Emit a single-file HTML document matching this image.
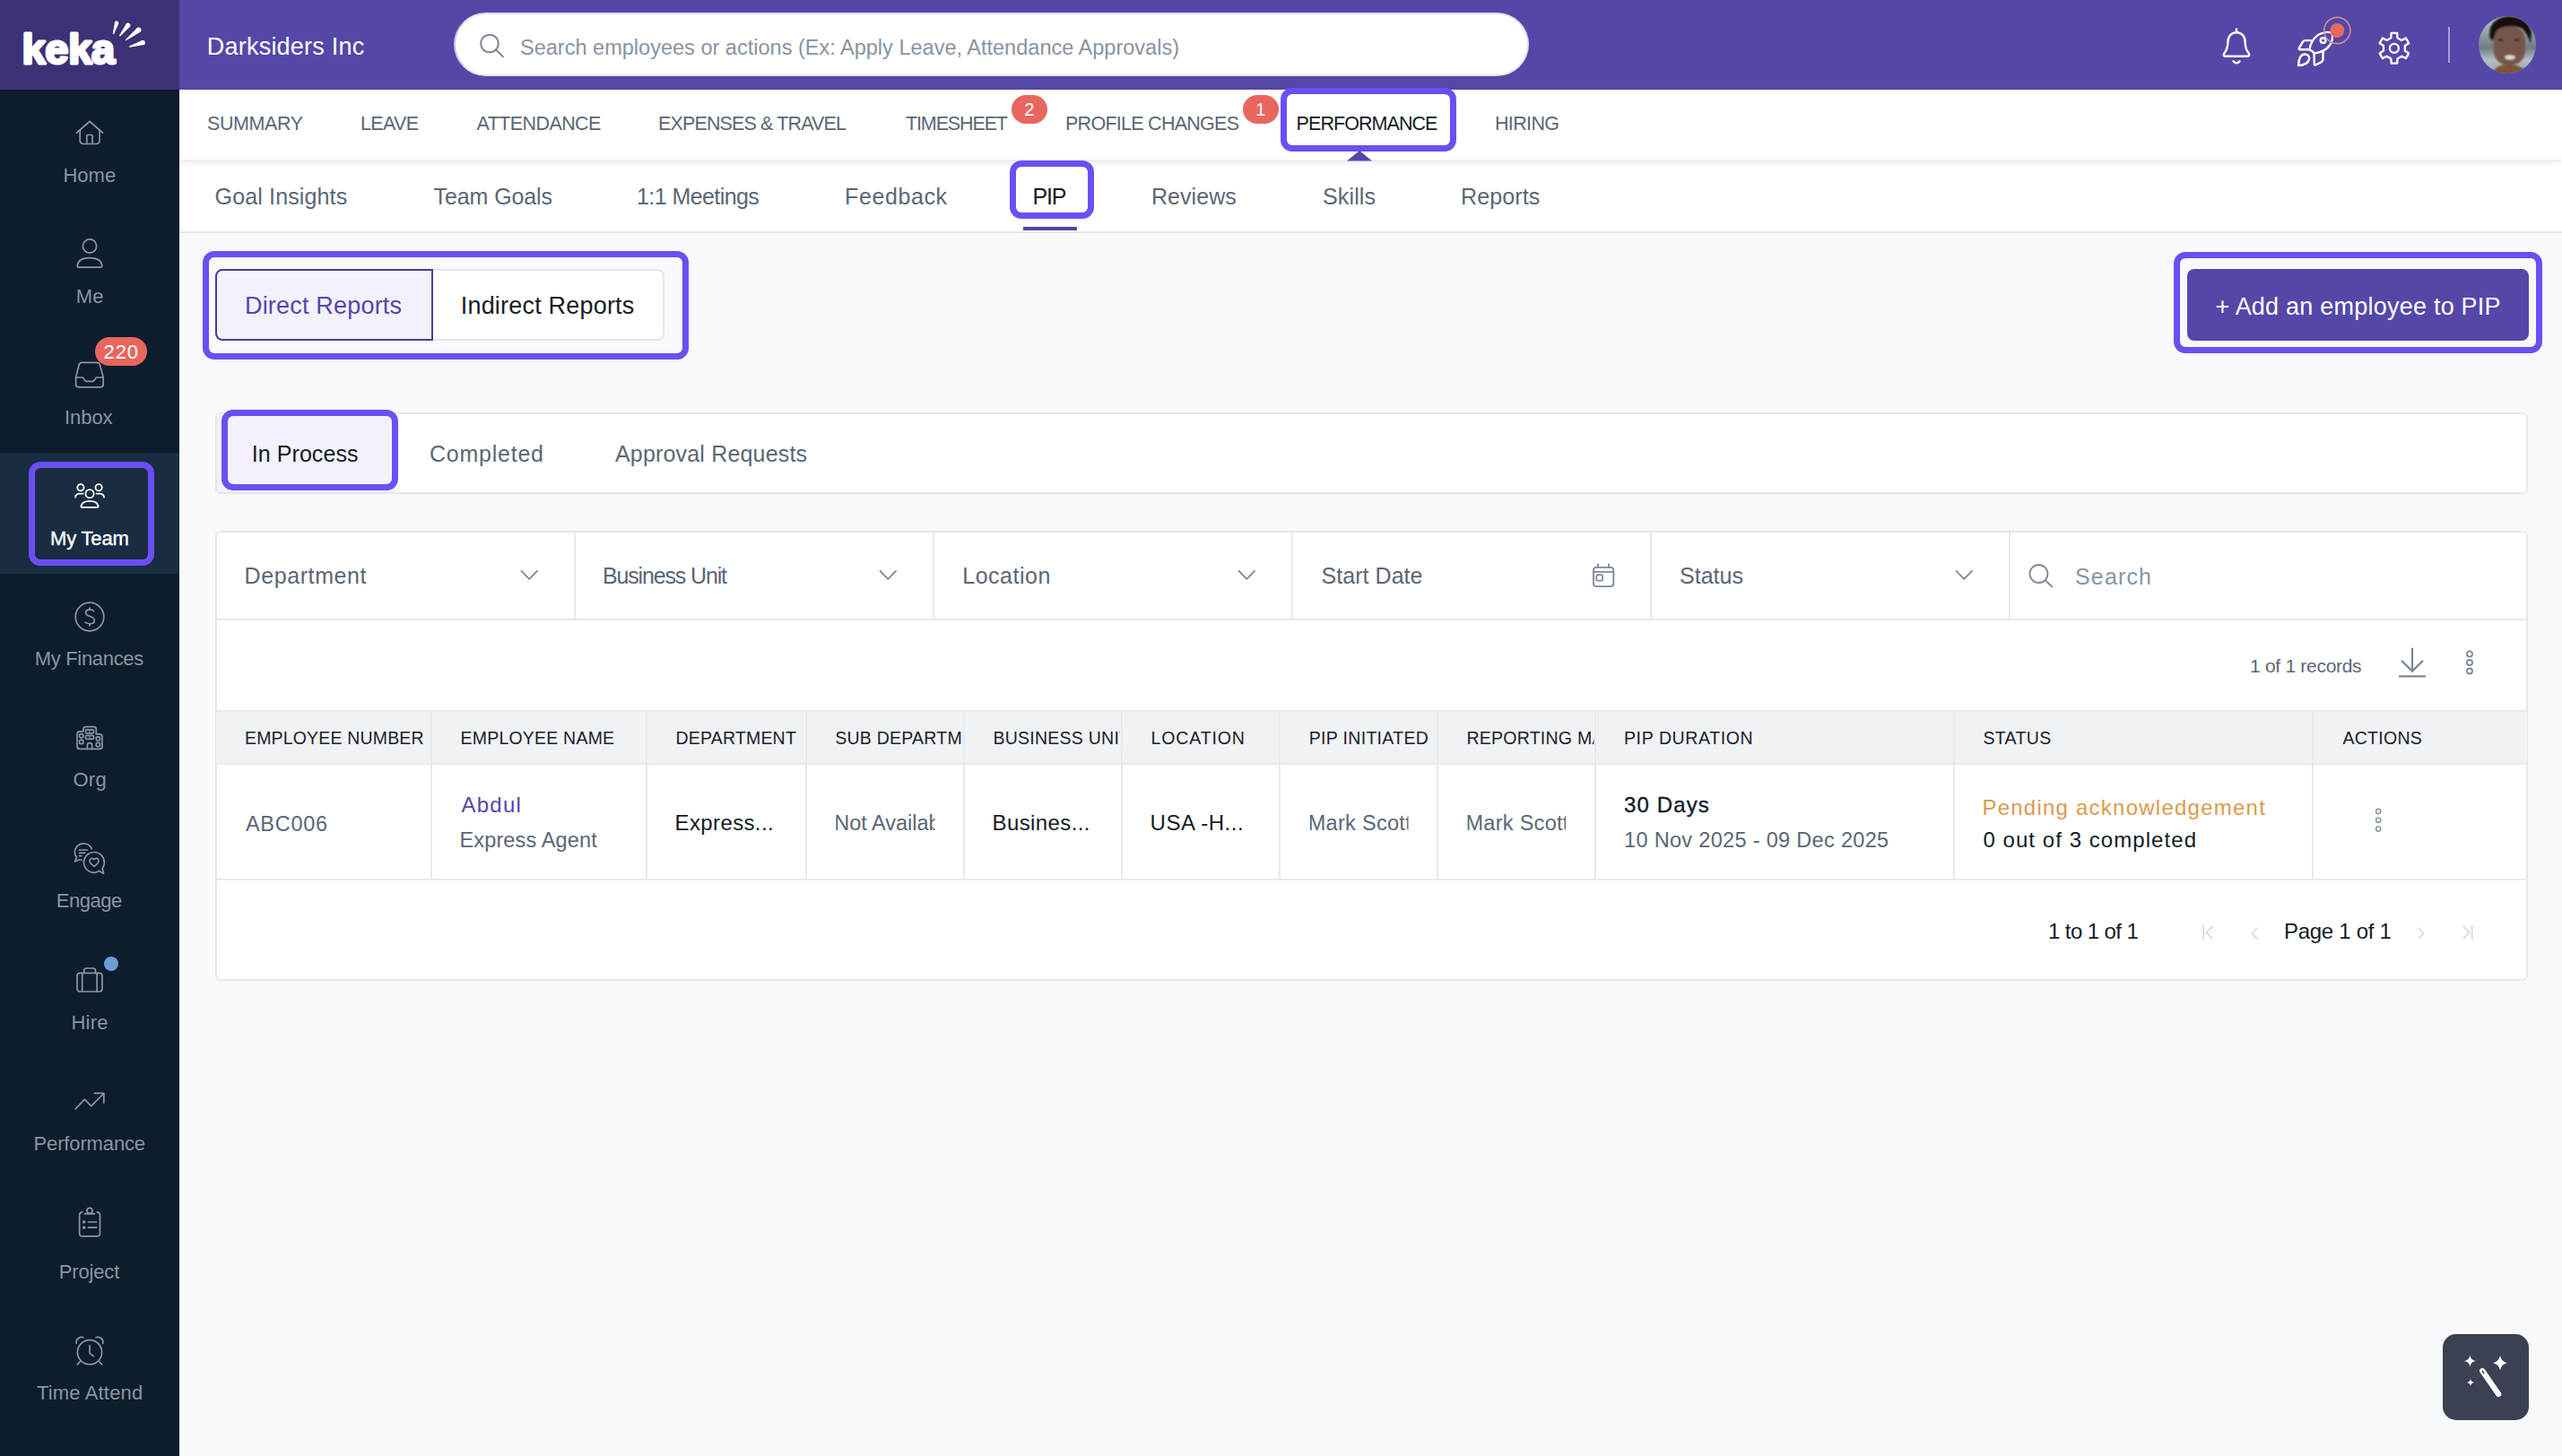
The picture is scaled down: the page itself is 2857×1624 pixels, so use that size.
<!DOCTYPE html>
<html><head><meta charset="utf-8"><title>Keka PIP</title>
<style>
html,body{margin:0;padding:0;}
body{width:2857px;height:1624px;overflow:hidden;position:relative;background:#f8f9fb;font-family:"Liberation Sans",sans-serif;}
.a{position:absolute;box-sizing:border-box;}
.t{position:absolute;z-index:5;white-space:nowrap;line-height:1;font-family:"Liberation Sans",sans-serif;}
.hl{position:absolute;box-sizing:border-box;border:7px solid #6a4ff4;border-radius:13px;}
body>svg{position:absolute;overflow:visible;}

</style></head><body>
<!-- sidebar -->
<div class="a" style="left:0;top:0;width:200px;height:1624px;background:#0d1d2c"></div>
<div class="a" style="left:0;top:0;width:200px;height:100px;background:#3c3175"></div>
<div class="a" style="left:0;top:505px;width:200px;height:135px;background:#192c42"></div>
<div class="hl" style="left:32px;top:515px;width:140px;height:116px;"></div>
<!-- header -->
<div class="a" style="left:200px;top:0;width:2657px;height:100px;background:#5547a8"></div>
<div class="a" style="left:506px;top:14px;width:1199px;height:71px;background:#fff;border-radius:36px;border:2px solid #dfe2e8;border-left-color:#c9cbe0;"></div>
<!-- nav -->
<div class="a" style="left:200px;top:100px;width:2657px;height:78px;background:#fff;box-shadow:0 3px 7px rgba(20,30,50,0.1);z-index:1"></div>
<div class="a" style="left:200px;top:178px;width:2657px;height:82px;background:#fff;border-bottom:2px solid #e6e8ec"></div>
<div class="a" style="left:1141px;top:253px;width:60px;height:4px;background:#5547a8;z-index:2"></div>
<!-- badges -->
<div class="a" style="left:1128px;top:106px;width:40px;height:32px;border-radius:16px;background:#e8665e;z-index:3"></div>
<div class="a" style="left:1386px;top:106px;width:40px;height:32px;border-radius:16px;background:#e8665e;z-index:3"></div>
<div class="a" style="left:106px;top:376px;width:58px;height:32px;border-radius:16px;background:#e8665e;z-index:3"></div>
<!-- highlight perf -->
<div class="hl" style="left:1428px;top:98px;width:196px;height:71px;z-index:3"></div>
<svg style="left:1502px;top:168px;z-index:3" width="28" height="12"><path d="M0 11.5 L14 0 L28 11.5 Z" fill="#5547a8"/></svg>
<div class="hl" style="left:1126px;top:179px;width:94px;height:65px;z-index:3"></div>
<!-- toggle -->
<div class="hl" style="left:226px;top:280px;width:542px;height:121px;"></div>
<div class="a" style="left:240px;top:300px;width:501px;height:80px;background:#fff;border:2px solid #e6e7eb;border-radius:8px"></div>
<div class="a" style="left:240px;top:300px;width:243px;height:80px;background:#f4f1fc;border:2px solid #4a3c9e;border-radius:8px 0 0 8px"></div>
<!-- add button -->
<div class="hl" style="left:2424px;top:281px;width:411px;height:113px;"></div>
<div class="a" style="left:2439px;top:300px;width:381px;height:80px;background:#5547a8;border-radius:8px"></div>
<!-- tabs -->
<div class="a" style="left:240px;top:460px;width:2579px;height:91px;background:#fff;border:2px solid #e6e7eb;border-radius:6px"></div>
<div class="a" style="left:242px;top:462px;width:200px;height:87px;background:#f4f1fc;"></div>
<div class="hl" style="left:247px;top:457px;width:197px;height:90px;background:#f4f1fc"></div>
<!-- card -->
<div class="a" style="left:240px;top:592px;width:2579px;height:502px;background:#fff;border:2px solid #e6e7eb;border-radius:6px"></div>
<div class="a" style="left:241px;top:690px;width:2577px;height:2px;background:#e6e7eb"></div>
<!-- table header -->
<div class="a" style="left:241px;top:792px;width:2577px;height:61px;background:#f1f2f4;border-top:2px solid #e8e9ec;border-bottom:2px solid #e8e9ec"></div>
<div class="a" style="left:241px;top:980px;width:2577px;height:2px;background:#e8e9ec"></div>
<!-- column dividers -->
<div class="a" style="left:480px;top:792px;width:2px;height:189px;background:#e8e9ec"></div>
<div class="a" style="left:720px;top:792px;width:2px;height:189px;background:#e8e9ec"></div>
<div class="a" style="left:898px;top:792px;width:2px;height:189px;background:#e8e9ec"></div>
<div class="a" style="left:1074px;top:792px;width:2px;height:189px;background:#e8e9ec"></div>
<div class="a" style="left:1250px;top:792px;width:2px;height:189px;background:#e8e9ec"></div>
<div class="a" style="left:1426px;top:792px;width:2px;height:189px;background:#e8e9ec"></div>
<div class="a" style="left:1602px;top:792px;width:2px;height:189px;background:#e8e9ec"></div>
<div class="a" style="left:1778px;top:792px;width:2px;height:189px;background:#e8e9ec"></div>
<div class="a" style="left:2178px;top:792px;width:2px;height:189px;background:#e8e9ec"></div>
<div class="a" style="left:2578px;top:792px;width:2px;height:189px;background:#e8e9ec"></div>
<!-- filter dividers -->
<div class="a" style="left:640px;top:594px;width:2px;height:97px;background:#e8e9ec"></div>
<div class="a" style="left:1040px;top:594px;width:2px;height:97px;background:#e8e9ec"></div>
<div class="a" style="left:1440px;top:594px;width:2px;height:97px;background:#e8e9ec"></div>
<div class="a" style="left:1840px;top:594px;width:2px;height:97px;background:#e8e9ec"></div>
<div class="a" style="left:2240px;top:594px;width:2px;height:97px;background:#e8e9ec"></div>
<svg style="left:0;top:0;z-index:6;pointer-events:none" width="2857" height="1624" viewBox="0 0 2857 1624">
<!-- logo text -->
<text x="24.5" y="71.3" font-family="Liberation Sans" font-weight="700" font-size="47" letter-spacing="-0.3" fill="#fff" stroke="#fff" stroke-width="3" stroke-linejoin="round">keka</text>
<!-- avatar -->
<defs><clipPath id="avc"><circle cx="2796" cy="50" r="32"/></clipPath>
<filter id="blur1" x="-20%" y="-20%" width="140%" height="140%"><feGaussianBlur stdDeviation="1.3"/></filter>
<linearGradient id="avbg" x1="0" y1="0" x2="0" y2="1"><stop offset="0" stop-color="#c3ccd0"/><stop offset="0.35" stop-color="#8d9aa1"/><stop offset="0.55" stop-color="#6f7d85"/><stop offset="0.75" stop-color="#b4bec4"/><stop offset="1" stop-color="#96a2a8"/></linearGradient></defs>
<g clip-path="url(#avc)">
  <rect x="2762" y="16" width="68" height="68" fill="url(#avbg)"/>
  <g filter="url(#blur1)">
  <path d="M2776 90 Q2779 72 2797 72 Q2818 72 2822 90 Z" fill="#7b5335"/>
  <path d="M2781 44 Q2780 30 2797 28 Q2815 29 2816 44 L2816 58 Q2814 72 2798 73 Q2783 72 2781 58 Z" fill="#74574a"/>
  <path d="M2776.5 42 Q2774 22 2795 18 Q2818 17 2823 36 L2822 48 Q2819 40 2816 36 Q2812 28 2797 29.5 Q2786 30 2783 36 L2780 46 Z" fill="#121010"/>
  <path d="M2786 44.5 h5 M2804 44.5 h5" stroke="#2b1d18" stroke-width="2"/>
  <ellipse cx="2799" cy="64" rx="5.8" ry="2.4" fill="#e8ddd6"/>
  </g>
</g>
<!-- logo -->
<g fill="#fff"><path d="M127.17 37.80 L132.11 26.43 A2.2 2.2 0 0 0 127.89 25.17 L125.83 37.40 Z"/><circle cx="130.00" cy="25.80" r="2.2"/><circle cx="126.50" cy="37.60" r="0.7"/><path d="M134.25 40.13 L144.74 29.91 A2.6 2.6 0 0 0 140.66 26.69 L133.15 39.27 Z"/><circle cx="142.70" cy="28.30" r="2.6"/><circle cx="133.70" cy="39.70" r="0.7"/><path d="M141.03 45.05 L156.24 35.70 A2.8 2.8 0 0 0 152.76 31.30 L140.17 43.95 Z"/><circle cx="154.50" cy="33.50" r="2.8"/><circle cx="140.60" cy="44.50" r="0.7"/><path d="M144.90 52.67 L159.95 50.09 A2.6 2.6 0 0 0 158.45 45.11 L144.50 51.33 Z"/><circle cx="159.20" cy="47.60" r="2.6"/><circle cx="144.70" cy="52.00" r="0.7"/></g>
<!-- header search icon -->
<g fill="none" stroke="#7e8a9a" stroke-width="2" stroke-linecap="round">
  <circle cx="546" cy="48.5" r="9.8"/>
  <line x1="553.3" y1="55.8" x2="561" y2="63.2"/>
</g>
<!-- bell -->
<g fill="none" stroke="#fff" stroke-width="2.4" stroke-linejoin="round" stroke-linecap="round">
  <path d="M2494 36.2 C2487.5 36.2 2484.3 41.5 2484.3 47.5 C2484.3 53 2483.5 55.5 2480.3 59.5 Q2478.5 62.8 2482 62.8 H2506 Q2509.5 62.8 2507.7 59.5 C2504.5 55.5 2503.7 53 2503.7 47.5 C2503.7 41.5 2500.5 36.2 2494 36.2 Z"/>
  <line x1="2494" y1="32.5" x2="2494" y2="35.5"/>
  <path d="M2490.5 68.3 Q2494 72.5 2497.5 68.3"/>
</g>
<!-- rocket -->
<g fill="none" stroke="#fff" stroke-width="2.4" stroke-linejoin="round" stroke-linecap="round">
  <path d="M2575.5 55.5 C2576 49 2580 41 2588 37.5 C2592 35.8 2597 35.5 2600.6 36.5 C2601.5 40.5 2601 46 2598 50.5 C2594.5 55.5 2588 58.5 2580.5 59.5 C2579.5 57.5 2577.5 56 2575.5 55.5 Z"/>
  <circle cx="2590.6" cy="45.1" r="2.9"/>
  <path d="M2577.2 45.1 H2570.6 Q2568.6 45.1 2567.8 46.9 L2564 53.4 Q2563.1 55.3 2565.1 55.3 H2575.5"/>
  <path d="M2580.5 59.5 L2580.8 71.3 Q2581 73 2582.6 72.3 L2588.8 69.1 Q2590.5 68.1 2590.5 66.3 V57.6"/>
  <path d="M2563.1 73 C2563.1 66 2565.6 60.5 2570 60.5 C2573.6 60.5 2576 63 2575 66.5 C2573.5 71 2568.6 72.8 2563.1 73 Z"/>
</g>
<circle cx="2606.3" cy="34" r="14.6" fill="none" stroke="#d08a93" stroke-width="1.6"/>
<circle cx="2606.3" cy="34" r="8" fill="#e8695f"/>
<!-- gear -->
<g fill="none" stroke="#fff" stroke-width="2.3" stroke-linejoin="round">
  <path d="M2666.33 42.13 L2666.62 36.92 L2673.18 36.92 L2673.47 42.13 L2678.22 44.88 L2682.88 42.52 L2686.16 48.20 L2681.79 51.06 L2681.79 56.54 L2686.16 59.40 L2682.88 65.08 L2678.22 62.72 L2673.47 65.47 L2673.18 70.68 L2666.62 70.68 L2666.33 65.47 L2661.58 62.72 L2656.92 65.08 L2653.64 59.40 L2658.01 56.54 L2658.01 51.06 L2653.64 48.20 L2656.92 42.52 L2661.58 44.88 Z"/>
  <circle cx="2669.9" cy="53.8" r="5"/>
</g>
<line x1="2731" y1="30" x2="2731" y2="70" stroke="#a79ddd" stroke-width="2"/>
<!-- sidebar icons -->
<g fill="none" stroke="#8b95a3" stroke-width="1.7" stroke-linecap="round" stroke-linejoin="round">
  <!-- home -->
  <path d="M85.5 148 L100 135.5 L114.5 148"/>
  <path d="M89.2 145.5 V156.5 Q89.2 160.5 93.2 160.5 H107 Q111 160.5 111 156.5 V145.5"/>
  <path d="M96.8 160.5 V151.5 Q96.8 150.5 97.8 150.5 H102.1 Q103.1 150.5 103.1 151.5 V160.5"/>
  <!-- me -->
  <circle cx="100" cy="274.5" r="7.6"/>
  <path d="M87.5 298.2 Q86 298.2 86.3 296 C87 290.5 92.5 287.6 100 287.6 C107.5 287.6 113 290.5 113.7 296 Q114 298.2 112.5 298.2 Z"/>
  <!-- inbox -->
  <path d="M84.6 421 L88.2 406.8 Q88.8 404.3 91.3 404.3 H108.3 Q110.8 404.3 111.4 406.8 L115.2 421 V428.8 Q115.2 431.8 112.2 431.8 H87.6 Q84.6 431.8 84.6 428.8 Z"/>
  <path d="M84.6 421 H92.4 L94.8 424.6 Q95.3 425.3 96.2 425.3 H103.6 Q104.5 425.3 105 424.6 L107.3 421 H115.2"/>
  <!-- finances -->
  <circle cx="100" cy="688" r="15.8"/>
  <path d="M104.6 681.5 Q103 679.8 100.2 679.8 Q95.6 679.8 95.6 683.2 Q95.6 686 100.5 687.5 Q105.3 689 105.3 692 Q105.3 695.8 100.3 695.8 Q96.8 695.8 95 694.2"/>
  <line x1="100" y1="678" x2="100" y2="679.8"/>
  <line x1="100" y1="695.8" x2="100" y2="697.8"/>
  <!-- org -->
  <path d="M86 832 V819 Q86 815.8 89 815.8 H92.9 V813.7 Q92.9 810.7 96 810.7 H104.3 Q107.3 810.7 107.3 813.7 V818.9 H111 Q114 818.9 114 822 V832.4 Q114 835.4 111 835.4 H89 Q86 835.4 86 832.4 Z"/>
  <rect x="95.5" y="813.8" width="9" height="4" rx="1.2"/>
  <rect x="95.5" y="820.4" width="9" height="4" rx="1.2"/>
  <line x1="100" y1="814.5" x2="100" y2="817.1" stroke-width="1.1"/><line x1="100" y1="821.1" x2="100" y2="823.7" stroke-width="1.1"/>
  <rect x="88.6" y="818.6" width="4.2" height="4.2" rx="1.2"/>
  <rect x="88.6" y="825.4" width="4.2" height="4.2" rx="1.2"/>
  <rect x="107.3" y="821.8" width="4.2" height="4.2" rx="1.2"/>
  <rect x="107.3" y="828.4" width="4.2" height="4.2" rx="1.2"/>
  <path d="M97.4 835.4 V831 Q97.4 828.6 100 828.6 Q102.6 828.6 102.6 831 V835.4"/>
  <!-- engage -->
  <path d="M102.3 946.8 C100.8 943 97.3 940.8 93 940.8 C87.5 940.8 83.3 945 83.3 950.3 C83.3 952.8 84.1 954.8 85.5 956.4 L83.5 961 L88.2 959 Q89 958.5 89.8 959 L91 959.5"/>
  <line x1="88.6" y1="948" x2="97.5" y2="948"/>
  <line x1="88.6" y1="951.3" x2="94.8" y2="951.3"/>
  <line x1="88.6" y1="954.6" x2="90.8" y2="954.6"/>
  <path d="M105 950.5 C111.5 950.5 116.3 955.5 116.3 962 C116.3 964.5 115.5 966.8 114.2 968.5 L115.5 974.3 L110.3 971.4 C108.8 972.6 107 973.3 105 973.3 C98.7 973.3 93.5 968.3 93.5 962 C93.5 955.5 98.7 950.5 105 950.5 Z"/>
  <path d="M105 966.5 L101 962.8 Q99.3 961 100.3 958.9 Q101.6 956.8 104 957.8 L105 958.6 L106 957.8 Q108.4 956.8 109.7 958.9 Q110.7 961 109 962.8 Z"/>
  <!-- hire -->
  <rect x="86" y="1085.3" width="28" height="20.7" rx="3.2"/>
  <path d="M93.7 1085.3 V1082.4 Q93.7 1080 96.1 1080 H104 Q106.4 1080 106.4 1082.4 V1085.3"/>
  <line x1="91.7" y1="1085.3" x2="91.7" y2="1106"/>
  <line x1="108.1" y1="1085.3" x2="108.1" y2="1106"/>
  <!-- performance -->
  <path d="M84.2 1237 L94.3 1226.2 L101.7 1233.6 L115.3 1220"/>
  <path d="M105.2 1219.3 H115.8 V1230.2"/>
  <!-- project -->
  <path d="M91.8 1351.8 Q88.6 1352.3 88.6 1355.6 V1375.4 Q88.6 1378.9 92.1 1378.9 H108 Q111.5 1378.9 111.5 1375.4 V1355.6 Q111.5 1352.3 108.3 1351.8"/>
  <line x1="94.6" y1="1353.9" x2="105.4" y2="1353.9"/>
  <circle cx="100" cy="1350.4" r="3"/>
  <line x1="98.5" y1="1363" x2="107.5" y2="1363"/>
  <line x1="98.5" y1="1369.2" x2="107.5" y2="1369.2"/>
  <!-- time attend -->
  <circle cx="100" cy="1508.2" r="13.6"/>
  <path d="M100 1500.5 V1509.4 L104.5 1512.6"/>
  <path d="M85.2 1498.3 A5.8 5.8 0 0 1 93 1491.8"/>
  <path d="M114.8 1498.3 A5.8 5.8 0 0 0 107 1491.8"/>
  <line x1="89.5" y1="1518.5" x2="86.3" y2="1521.8"/>
  <line x1="110.5" y1="1518.5" x2="113.7" y2="1521.8"/>
</g>
<g fill="#8b95a3">
  <circle cx="93.7" cy="1363" r="1.7"/>
  <circle cx="93.7" cy="1369.2" r="1.7"/>
</g>
<!-- my team (white) -->
<g fill="none" stroke="#fff" stroke-width="1.8" stroke-linecap="round" stroke-linejoin="round">
  <circle cx="100" cy="550.7" r="4.6"/>
  <path d="M91.5 565.8 Q90.3 565.8 90.5 564.2 C91.2 560.8 95 558.8 100 558.8 C105 558.8 108.8 560.8 109.5 564.2 Q109.7 565.8 108.5 565.8 Z"/>
  <circle cx="89.9" cy="543.8" r="3.6"/>
  <circle cx="110.1" cy="543.8" r="3.6"/>
  <path d="M92.5 550.6 H88.5 Q84.5 550.8 84 554.6"/>
  <path d="M107.5 550.6 H111.5 Q115.5 550.8 116 554.6"/>
</g>
<circle cx="124" cy="1075" r="8" fill="#6a9fd6"/>
<!-- filter chevrons -->
<g fill="none" stroke="#7d8898" stroke-width="1.8" stroke-linecap="round" stroke-linejoin="round">
  <path d="M581.5 636.8 L590.3 645.8 L599 636.8"/>
  <path d="M981.5 636.8 L990.3 645.8 L999 636.8"/>
  <path d="M1381.5 636.8 L1390.3 645.8 L1399 636.8"/>
  <path d="M2181.5 636.8 L2190.3 645.8 L2199 636.8"/>
  <!-- calendar -->
  <rect x="1777" y="632.8" width="22.3" height="21.3" rx="3.2"/>
  <line x1="1777" y1="637.8" x2="1799.3" y2="637.8"/>
  <line x1="1782" y1="629.3" x2="1782" y2="632.8"/>
  <line x1="1794" y1="629.3" x2="1794" y2="632.8"/>
  <rect x="1780.3" y="641.2" width="6.8" height="6.5" rx="1.5"/>
  <!-- search -->
  <circle cx="2273.5" cy="640" r="10"/>
  <line x1="2281" y1="647.5" x2="2288.3" y2="654.3"/>
  <!-- download -->
  <line x1="2690" y1="723.5" x2="2690" y2="748.3" stroke-width="2.2"/>
  <path d="M2678.6 737.4 L2690 748.6 L2701.4 737.4" stroke-width="2.2"/>
  <line x1="2676" y1="754.4" x2="2704.2" y2="754.4" stroke-width="2.3"/>
  <!-- dots -->
  <circle cx="2754" cy="729.4" r="3" />
  <circle cx="2754" cy="739" r="3" />
  <circle cx="2754" cy="748.5" r="3" />
</g>
<!-- row dots -->
<g fill="none" stroke="#8d98a8" stroke-width="1.6">
  <circle cx="2652.2" cy="905" r="2.6"/>
  <circle cx="2652.2" cy="914.8" r="2.6"/>
  <circle cx="2652.2" cy="924.6" r="2.6"/>
</g>
<!-- pagination -->
<g fill="none" stroke="#d3d7dd" stroke-width="1.6" stroke-linecap="round" stroke-linejoin="round">
  <line x1="2457.3" y1="1032.3" x2="2457.3" y2="1047.3"/>
  <path d="M2466.8 1033.2 L2460.4 1040 L2466.8 1046.6"/>
  <path d="M2516.6 1035.4 L2511.4 1041.2 L2516.6 1046.6"/>
  <path d="M2697.4 1035.4 L2702.6 1041.2 L2697.4 1046.6"/>
  <path d="M2747.2 1033.2 L2753.6 1040 L2747.2 1046.6"/>
  <line x1="2756.7" y1="1032.3" x2="2756.7" y2="1047.3"/>
</g>
</svg>
<!-- magic button -->
<div class="a" style="left:2724px;top:1488px;width:96px;height:96px;background:#3b4152;border-radius:15px;z-index:6"></div>
<svg style="left:2724px;top:1488px;z-index:7" width="96" height="96" viewBox="0 0 96 96">
  <g fill="#fff"><path d="M30.4 23.6 Q31.168 29.232 36.8 30 Q31.168 30.768 30.4 36.4 Q29.631999999999998 30.768 24.0 30 Q29.631999999999998 29.232 30.4 23.6 Z"/><path d="M64 24.099999999999998 Q65.312 30.987999999999996 72.2 32.3 Q65.312 33.611999999999995 64 40.5 Q62.688 33.611999999999995 55.8 32.3 Q62.688 30.987999999999996 64 24.099999999999998 Z"/><path d="M31 49.8 Q31.504 53.496 35.2 54 Q31.504 54.504 31 58.2 Q30.496 54.504 26.8 54 Q30.496 53.496 31 49.8 Z"/></g>
  <line x1="44.2" y1="41" x2="62.2" y2="67" stroke="#fff" stroke-width="6.2" stroke-linecap="round"/>
  <line x1="44.3" y1="41.3" x2="45.9" y2="43.7" stroke="#3b4152" stroke-width="1.5" stroke-linecap="round"/>
</svg>

<svg style="left:0;top:0;z-index:5;pointer-events:none" width="2857" height="1624" viewBox="0 0 2857 1624" font-family="Liberation Sans">
<text x="230.80" y="60.60" font-size="27" fill="#ffffff" textLength="175.40" lengthAdjust="spacing">Darksiders Inc</text>
<text x="580.00" y="60.60" font-size="23.5" fill="#8793a3" textLength="735.00" lengthAdjust="spacing">Search employees or actions (Ex: Apply Leave, Attendance Approvals)</text>
<text x="231.00" y="145.30" font-size="21.5" fill="#5b6675" textLength="107.00" lengthAdjust="spacing">SUMMARY</text>
<text x="402.00" y="145.30" font-size="21.5" fill="#5b6675" textLength="65.00" lengthAdjust="spacing">LEAVE</text>
<text x="531.60" y="145.30" font-size="21.5" fill="#5b6675" textLength="138.80" lengthAdjust="spacing">ATTENDANCE</text>
<text x="734.00" y="145.30" font-size="21.5" fill="#5b6675" textLength="210.00" lengthAdjust="spacing">EXPENSES &amp; TRAVEL</text>
<text x="1010.00" y="145.30" font-size="21.5" fill="#5b6675" textLength="114.00" lengthAdjust="spacing">TIMESHEET</text>
<text x="1188.00" y="145.30" font-size="21.5" fill="#5b6675" textLength="194.00" lengthAdjust="spacing">PROFILE CHANGES</text>
<text x="1667.00" y="145.30" font-size="21.5" fill="#5b6675" textLength="72.00" lengthAdjust="spacing">HIRING</text>
<text x="1445.60" y="145.30" font-size="21.5" fill="#141b26" textLength="157.80" lengthAdjust="spacing">PERFORMANCE</text>
<text x="239.60" y="227.70" font-size="25" fill="#5b6675" textLength="147.60" lengthAdjust="spacing">Goal Insights</text>
<text x="483.60" y="227.70" font-size="25" fill="#5b6675" textLength="132.40" lengthAdjust="spacing">Team Goals</text>
<text x="710.00" y="227.70" font-size="25" fill="#5b6675" textLength="136.80" lengthAdjust="spacing">1:1 Meetings</text>
<text x="942.00" y="227.70" font-size="25" fill="#5b6675" textLength="114.00" lengthAdjust="spacing">Feedback</text>
<text x="1284.00" y="227.70" font-size="25" fill="#5b6675" textLength="94.80" lengthAdjust="spacing">Reviews</text>
<text x="1475.00" y="227.70" font-size="25" fill="#5b6675" textLength="59.00" lengthAdjust="spacing">Skills</text>
<text x="1629.00" y="227.70" font-size="25" fill="#5b6675" textLength="88.20" lengthAdjust="spacing">Reports</text>
<text x="1151.60" y="227.70" font-size="25" fill="#141b26" textLength="37.80" lengthAdjust="spacing">PIP</text>
<text x="70.40" y="203.00" font-size="22" fill="#8a95a2" textLength="58.80" lengthAdjust="spacing">Home</text>
<text x="84.70" y="337.60" font-size="22" fill="#8a95a2" textLength="30.80" lengthAdjust="spacing">Me</text>
<text x="72.00" y="473.10" font-size="22" fill="#8a95a2" textLength="53.60" lengthAdjust="spacing">Inbox</text>
<text x="38.80" y="742.20" font-size="22" fill="#8a95a2" textLength="121.40" lengthAdjust="spacing">My Finances</text>
<text x="81.40" y="876.60" font-size="22" fill="#8a95a2" textLength="37.40" lengthAdjust="spacing">Org</text>
<text x="62.70" y="1012.10" font-size="22" fill="#8a95a2" textLength="73.60" lengthAdjust="spacing">Engage</text>
<text x="79.50" y="1147.60" font-size="22" fill="#8a95a2" textLength="41.00" lengthAdjust="spacing">Hire</text>
<text x="37.50" y="1282.90" font-size="22" fill="#8a95a2" textLength="124.60" lengthAdjust="spacing">Performance</text>
<text x="65.70" y="1426.30" font-size="22" fill="#8a95a2" textLength="67.60" lengthAdjust="spacing">Project</text>
<text x="41.00" y="1560.90" font-size="22" fill="#8a95a2" textLength="118.20" lengthAdjust="spacing">Time Attend</text>
<text x="56.00" y="607.60" font-size="22" fill="#ffffff" stroke="#fff" stroke-width="0.35" textLength="87.80" lengthAdjust="spacing">My Team</text>
<text x="273.00" y="350.20" font-size="27" fill="#5547a8" textLength="175.00" lengthAdjust="spacing">Direct Reports</text>
<text x="513.70" y="350.20" font-size="27" fill="#161c26" textLength="193.60" lengthAdjust="spacing">Indirect Reports</text>
<text x="2470.40" y="350.60" font-size="27" fill="#ffffff" textLength="318.20" lengthAdjust="spacing">+ Add an employee to PIP</text>
<text x="280.70" y="515.00" font-size="25" fill="#141b26" textLength="118.80" lengthAdjust="spacing">In Process</text>
<text x="479.00" y="515.00" font-size="25" fill="#5b6675" textLength="127.00" lengthAdjust="spacing">Completed</text>
<text x="686.00" y="515.00" font-size="25" fill="#5b6675" textLength="214.00" lengthAdjust="spacing">Approval Requests</text>
<text x="272.50" y="651.00" font-size="25" fill="#5b6675" textLength="136.00" lengthAdjust="spacing">Department</text>
<text x="672.00" y="651.00" font-size="25" fill="#5b6675" textLength="139.00" lengthAdjust="spacing">Business Unit</text>
<text x="1073.20" y="651.00" font-size="25" fill="#5b6675" textLength="98.20" lengthAdjust="spacing">Location</text>
<text x="1473.50" y="651.00" font-size="25" fill="#5b6675" textLength="113.00" lengthAdjust="spacing">Start Date</text>
<text x="1873.00" y="651.00" font-size="25" fill="#5b6675" textLength="71.00" lengthAdjust="spacing">Status</text>
<text x="2314.00" y="652.40" font-size="25" fill="#8895a6" textLength="85.00" lengthAdjust="spacing">Search</text>
<text x="2509.00" y="750.00" font-size="21" fill="#5b6675" textLength="124.60" lengthAdjust="spacing">1 of 1 records</text>
<text x="273.00" y="830.30" font-size="19.5" fill="#1a212c" textLength="199.60" lengthAdjust="spacing">EMPLOYEE NUMBER</text>
<text x="513.50" y="830.30" font-size="19.5" fill="#1a212c" textLength="171.60" lengthAdjust="spacing">EMPLOYEE NAME</text>
<text x="753.60" y="830.30" font-size="19.5" fill="#1a212c" textLength="134.20" lengthAdjust="spacing">DEPARTMENT</text>
<svg x="932.20" y="808.85" width="140.80" height="29.25" style="overflow:hidden"><text x="-1.00" y="21.45" font-size="19.5" fill="#1a212c" style="letter-spacing:0.25px">SUB DEPARTMENT</text></svg>
<svg x="1108.50" y="808.85" width="140.50" height="29.25" style="overflow:hidden"><text x="-1.00" y="21.45" font-size="19.5" fill="#1a212c" style="letter-spacing:0.25px">BUSINESS UNIT</text></svg>
<text x="1283.60" y="830.30" font-size="19.5" fill="#1a212c" textLength="104.20" lengthAdjust="spacing">LOCATION</text>
<text x="1459.70" y="830.30" font-size="19.5" fill="#1a212c" textLength="133.20" lengthAdjust="spacing">PIP INITIATED</text>
<svg x="1636.40" y="808.85" width="141.10" height="29.25" style="overflow:hidden"><text x="-1.00" y="21.45" font-size="19.5" fill="#1a212c" style="letter-spacing:0.25px">REPORTING MANAGER</text></svg>
<text x="1811.00" y="830.30" font-size="19.5" fill="#1a212c" textLength="143.60" lengthAdjust="spacing">PIP DURATION</text>
<text x="2211.40" y="830.30" font-size="19.5" fill="#1a212c" textLength="75.80" lengthAdjust="spacing">STATUS</text>
<text x="2612.40" y="830.30" font-size="19.5" fill="#1a212c" textLength="88.40" lengthAdjust="spacing">ACTIONS</text>
<text x="274.00" y="926.70" font-size="23.5" fill="#5b6675" textLength="91.00" lengthAdjust="spacing">ABC006</text>
<text x="514.50" y="906.30" font-size="24" fill="#5547a8" textLength="66.40" lengthAdjust="spacing">Abdul</text>
<text x="512.50" y="944.70" font-size="23.5" fill="#5b6675" textLength="153.20" lengthAdjust="spacing">Express Agent</text>
<text x="752.60" y="926.40" font-size="24" fill="#141b26" textLength="110.00" lengthAdjust="spacing">Express...</text>
<svg x="932.20" y="900.55" width="110.40" height="35.25" style="overflow:hidden"><text x="-2.00" y="25.85" font-size="23.5" fill="#5b6675">Not Available</text></svg>
<text x="1106.50" y="926.40" font-size="24" fill="#141b26" textLength="109.00" lengthAdjust="spacing">Busines...</text>
<text x="1282.60" y="926.40" font-size="24" fill="#141b26" textLength="104.00" lengthAdjust="spacing">USA -H...</text>
<svg x="1460.70" y="900.55" width="109.80" height="35.25" style="overflow:hidden"><text x="-2.00" y="25.85" font-size="23.5" fill="#5b6675" textLength="115.00" lengthAdjust="spacing">Mark Scott</text></svg>
<svg x="1636.40" y="900.55" width="109.60" height="35.25" style="overflow:hidden"><text x="-2.00" y="25.85" font-size="23.5" fill="#5b6675" textLength="115.00" lengthAdjust="spacing">Mark Scott</text></svg>
<text x="1811.00" y="905.60" font-size="24" fill="#141b26" stroke="#141b26" stroke-width="0.35" textLength="94.80" lengthAdjust="spacing">30 Days</text>
<text x="1811.00" y="944.70" font-size="23.5" fill="#5b6675" textLength="295.20" lengthAdjust="spacing">10 Nov 2025 - 09 Dec 2025</text>
<text x="2210.40" y="908.50" font-size="24" fill="#dc9a4b" textLength="315.40" lengthAdjust="spacing">Pending acknowledgement</text>
<text x="2211.40" y="944.70" font-size="24" fill="#141b26" textLength="237.60" lengthAdjust="spacing">0 out of 3 completed</text>
<text x="2284.00" y="1047.00" font-size="24" fill="#141b26" textLength="100.80" lengthAdjust="spacing">1 to 1 of 1</text>
<text x="2547.00" y="1047.00" font-size="24" fill="#141b26" textLength="119.80" lengthAdjust="spacing">Page 1 of 1</text>
<text x="1147.80" y="128.50" text-anchor="middle" font-size="20" fill="#ffffff">2</text>
<text x="1405.80" y="128.50" text-anchor="middle" font-size="20" fill="#ffffff">1</text>
<text x="135.15" y="399.80" text-anchor="middle" font-size="22" fill="#ffffff" style="letter-spacing:0.8px">220</text>
</svg>
</body></html>
